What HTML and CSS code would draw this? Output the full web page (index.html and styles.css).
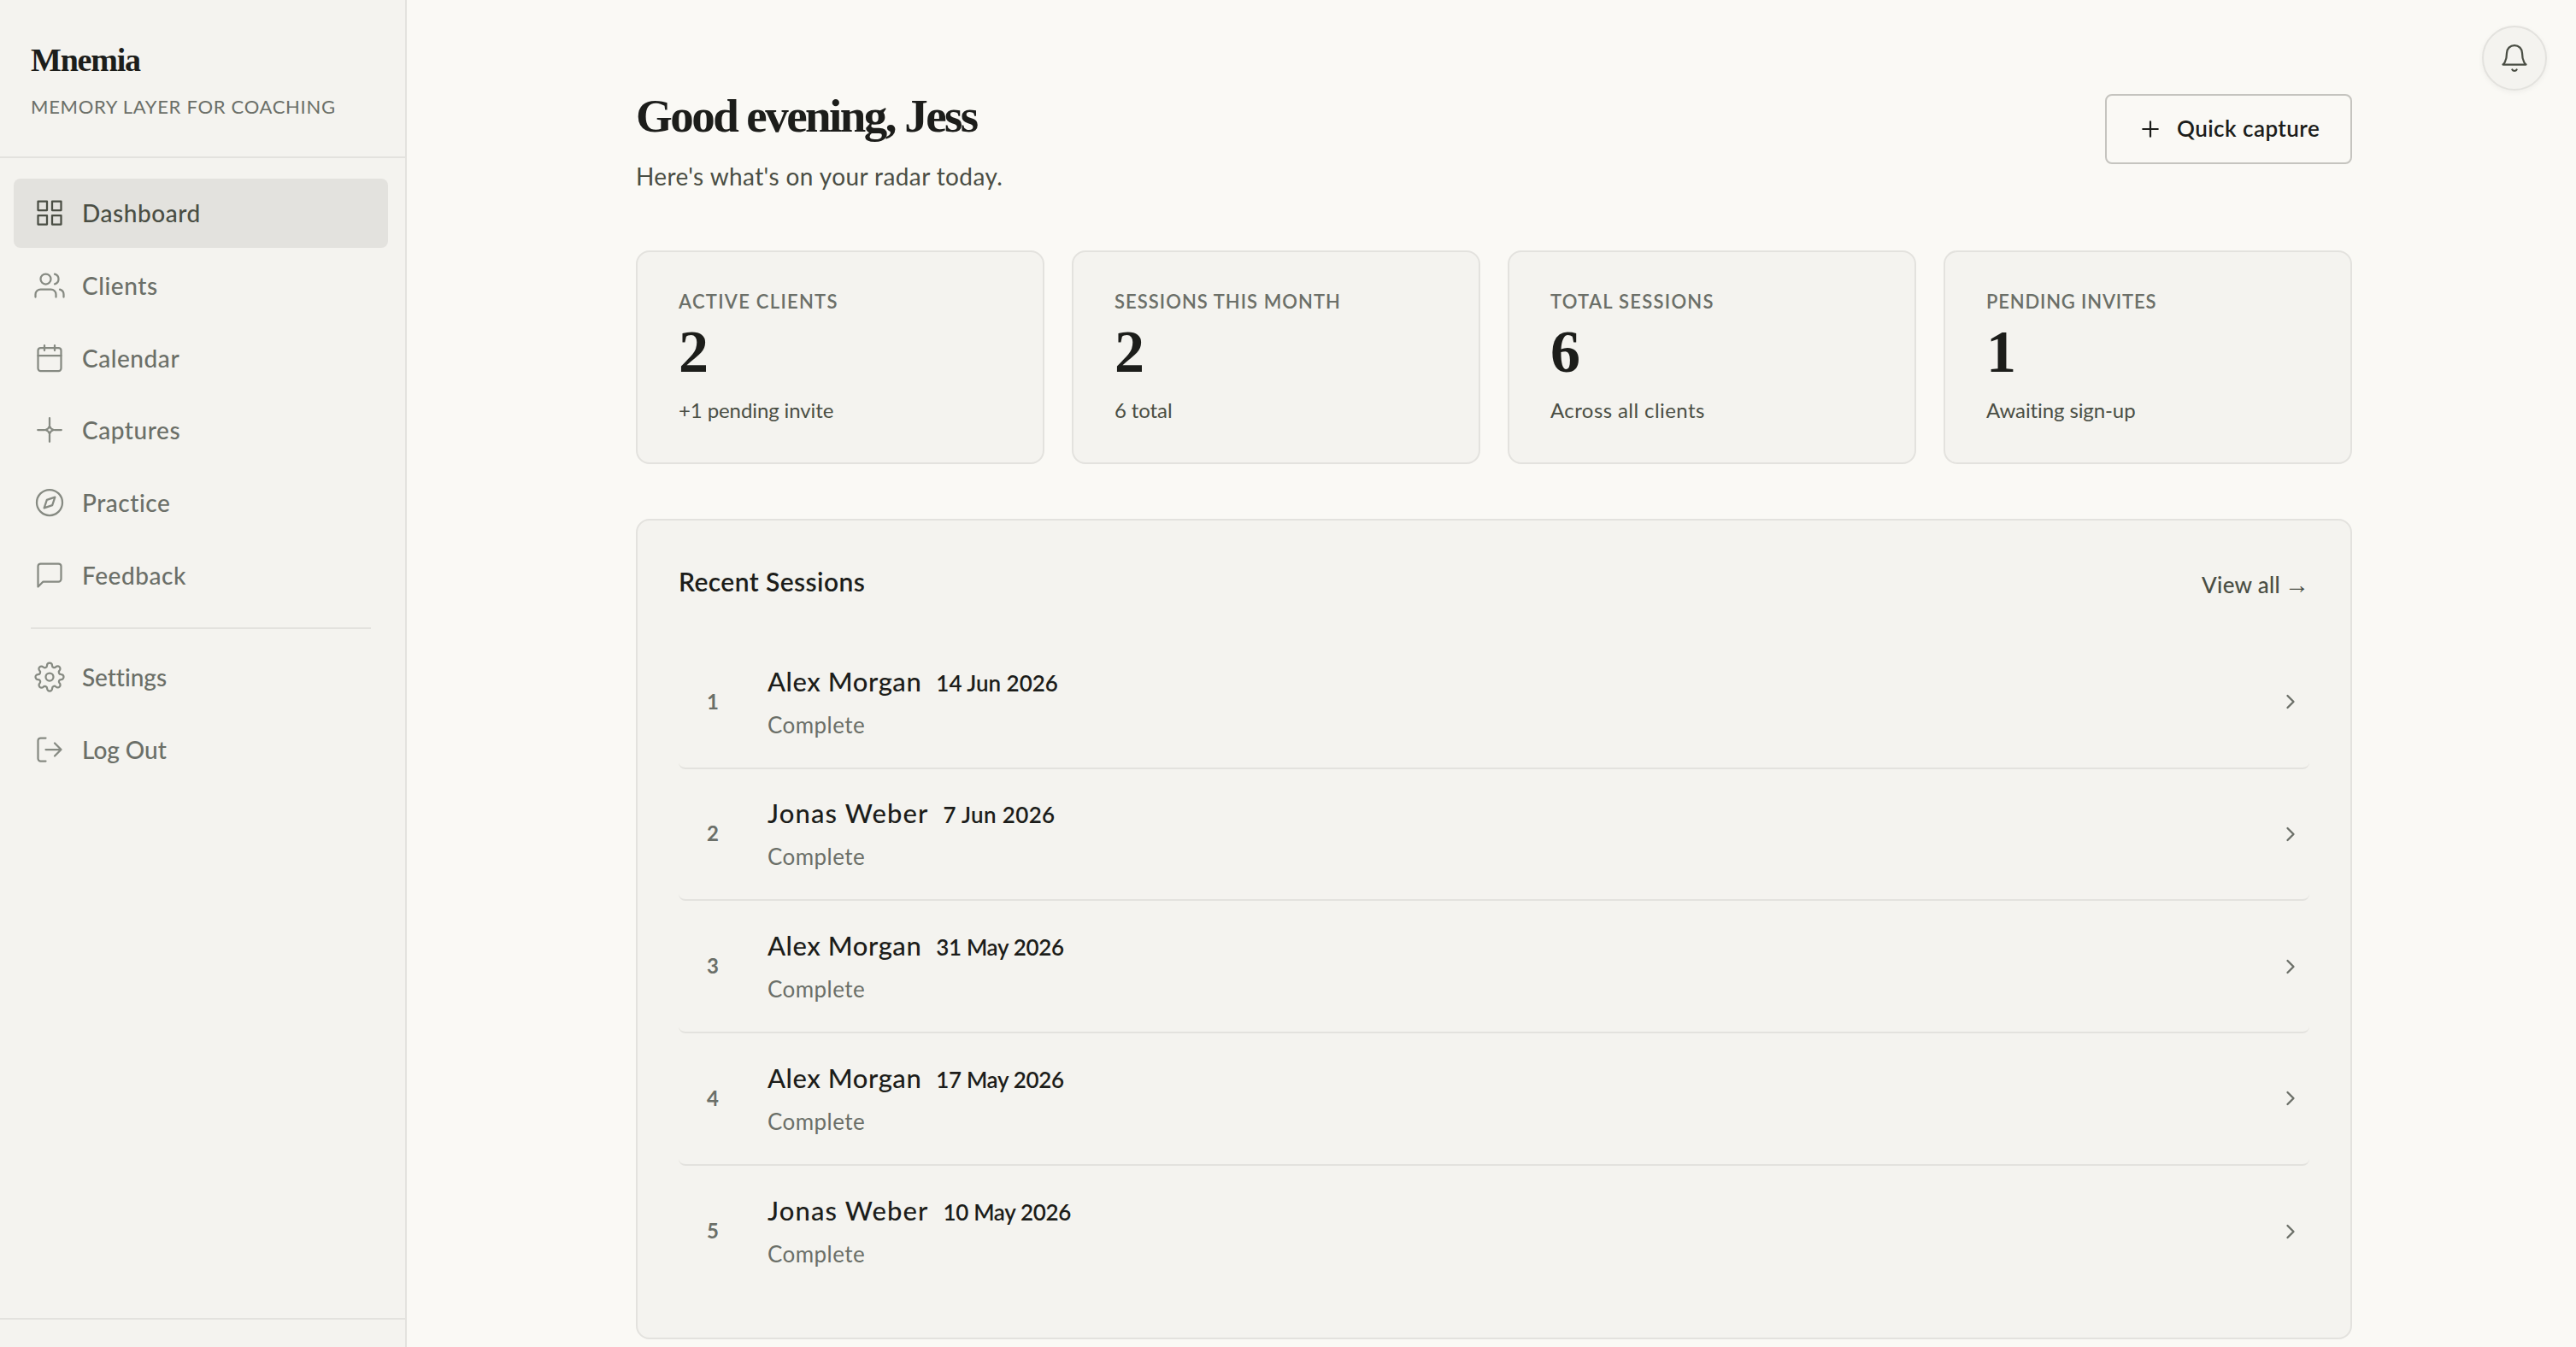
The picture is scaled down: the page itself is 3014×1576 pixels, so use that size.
FILE: index.html
```html
<!DOCTYPE html>
<html lang="en">
<head>
<meta charset="utf-8">
<title>Mnemia – Dashboard</title>
<link rel="stylesheet" href="styles.css">
</head>
<body>
<div class="app">
  <aside class="sidebar">
    <div class="brand">
      <div class="brand-name">Mnemia</div>
      <div class="brand-tag">MEMORY LAYER FOR COACHING</div>
    </div>
    <nav class="nav">
      <a class="nav-item active"><svg class="icon" viewBox="0 0 24 24"><rect x="3" y="3" width="7" height="7"/><rect x="14" y="3" width="7" height="7"/><rect x="14" y="14" width="7" height="7"/><rect x="3" y="14" width="7" height="7"/></svg><span>Dashboard</span></a>
      <a class="nav-item"><svg class="icon" viewBox="0 0 24 24"><path d="M17 21v-2a4 4 0 0 0-4-4H5a4 4 0 0 0-4 4v2"/><circle cx="9" cy="7" r="4"/><path d="M23 21v-2a4 4 0 0 0-3-3.87"/><path d="M16 3.13a4 4 0 0 1 0 7.75"/></svg><span>Clients</span></a>
      <a class="nav-item"><svg class="icon" viewBox="0 0 24 24"><rect x="3" y="4" width="18" height="18" rx="2"/><path d="M16 2v4M8 2v4M3 10h18"/></svg><span>Calendar</span></a>
      <a class="nav-item"><svg class="icon" viewBox="0 0 24 24"><path d="M12 2.8v5.400M12 15.800v5.400M2.800 12h5.400M15.800 12h5.400"/><path d="M12 9l1.100 1.900L15 12l-1.900 1.100L12 15l-1.100-1.900L9 12l1.900-1.100z"/></svg><span>Captures</span></a>
      <a class="nav-item"><svg class="icon" viewBox="0 0 24 24"><circle cx="12" cy="12" r="10"/><path d="M16.240 7.760l-2.120 6.360-6.360 2.120 2.120-6.360z"/></svg><span>Practice</span></a>
      <a class="nav-item"><svg class="icon" viewBox="0 0 24 24"><path d="M21 15a2 2 0 0 1-2 2H7l-4 4V5a2 2 0 0 1 2-2h14a2 2 0 0 1 2 2z"/></svg><span>Feedback</span></a>
      <div class="nav-divider"></div>
      <a class="nav-item compact"><svg class="icon" viewBox="0 0 24 24"><circle cx="12" cy="12" r="3"/><path d="M19.400 15a1.650 1.650 0 0 0 .33 1.820l.06.06a2 2 0 0 1 0 2.830 2 2 0 0 1-2.830 0l-.06-.06a1.650 1.650 0 0 0-1.820-.33 1.650 1.650 0 0 0-1 1.510V21a2 2 0 0 1-2 2 2 2 0 0 1-2-2v-.09A1.650 1.650 0 0 0 9 19.400a1.650 1.650 0 0 0-1.820.33l-.06.06a2 2 0 0 1-2.830 0 2 2 0 0 1 0-2.830l.06-.06a1.650 1.650 0 0 0 .33-1.820 1.650 1.650 0 0 0-1.510-1H3a2 2 0 0 1-2-2 2 2 0 0 1 2-2h.09A1.650 1.650 0 0 0 4.600 9a1.650 1.650 0 0 0-.33-1.820l-.06-.06a2 2 0 0 1 0-2.830 2 2 0 0 1 2.830 0l.06.06a1.650 1.650 0 0 0 1.820.33H9a1.650 1.650 0 0 0 1-1.510V3a2 2 0 0 1 2-2 2 2 0 0 1 2 2v.09a1.650 1.650 0 0 0 1 1.510 1.650 1.650 0 0 0 1.820-.33l.06-.06a2 2 0 0 1 2.830 0 2 2 0 0 1 0 2.830l-.06.06a1.650 1.650 0 0 0-.33 1.820V9a1.650 1.650 0 0 0 1.510 1H21a2 2 0 0 1 2 2 2 2 0 0 1-2 2h-.09a1.650 1.650 0 0 0-1.510 1z"/></svg><span>Settings</span></a>
      <a class="nav-item compact"><svg class="icon" viewBox="0 0 24 24"><path d="M9 21H5a2 2 0 0 1-2-2V5a2 2 0 0 1 2-2h4M16 17l5-5-5-5M21 12H9"/></svg><span>Log Out</span></a>
    </nav>
    <div class="sidebar-foot"></div>
  </aside>

  <main class="main">
    <header class="head">
      <div>
        <h1 class="title">Good evening, Jess</h1>
        <p class="subtitle">Here's what's on your radar today.</p>
      </div>
      <button class="capture"><svg class="plus" viewBox="0 0 24 24"><path d="M12 5v14M5 12h14"/></svg><span>Quick capture</span></button>
    </header>

    <section class="stats">
      <div class="stat"><div class="stat-label loose">ACTIVE CLIENTS</div><div class="stat-value">2</div><div class="stat-note tight">+1 pending invite</div></div>
      <div class="stat"><div class="stat-label">SESSIONS THIS MONTH</div><div class="stat-value">2</div><div class="stat-note tight">6 total</div></div>
      <div class="stat"><div class="stat-label loose">TOTAL SESSIONS</div><div class="stat-value">6</div><div class="stat-note">Across all clients</div></div>
      <div class="stat"><div class="stat-label snug">PENDING INVITES</div><div class="stat-value">1</div><div class="stat-note tight">Awaiting sign-up</div></div>
    </section>

    <section class="panel">
      <div class="panel-head">
        <h2 class="panel-title">Recent Sessions</h2>
        <a class="view-all">View all <span class="arrow">→</span></a>
      </div>
      <div class="rows">
        <div class="row"><span class="num">1</span><div class="info"><div class="line"><span class="name">Alex Morgan</span><span class="date">14 Jun 2026</span></div><div class="status">Complete</div></div><svg class="chev" viewBox="0 0 24 24"><path d="M9 18l6-6-6-6"/></svg></div>
        <div class="row"><span class="num">2</span><div class="info"><div class="line"><span class="name wide">Jonas Weber</span><span class="date short">7 Jun 2026</span></div><div class="status">Complete</div></div><svg class="chev" viewBox="0 0 24 24"><path d="M9 18l6-6-6-6"/></svg></div>
        <div class="row"><span class="num">3</span><div class="info"><div class="line"><span class="name">Alex Morgan</span><span class="date may">31 May 2026</span></div><div class="status">Complete</div></div><svg class="chev" viewBox="0 0 24 24"><path d="M9 18l6-6-6-6"/></svg></div>
        <div class="row"><span class="num">4</span><div class="info"><div class="line"><span class="name">Alex Morgan</span><span class="date may">17 May 2026</span></div><div class="status">Complete</div></div><svg class="chev" viewBox="0 0 24 24"><path d="M9 18l6-6-6-6"/></svg></div>
        <div class="row"><span class="num">5</span><div class="info"><div class="line"><span class="name wide">Jonas Weber</span><span class="date may">10 May 2026</span></div><div class="status">Complete</div></div><svg class="chev" viewBox="0 0 24 24"><path d="M9 18l6-6-6-6"/></svg></div>
      </div>
    </section>
  </main>

  <button class="bell" aria-label="Notifications"><svg class="icon" viewBox="0 0 24 24"><path d="M18 8A6 6 0 0 0 6 8c0 7-3 9-3 9h18s-3-2-3-9"/><path d="M13.730 21a2 2 0 0 1-3.460 0"/></svg></button>
</div>
</body>
</html>
```
FILE: styles.css
```css
* { box-sizing: border-box; }
body {
  margin: 0;
  background: #faf9f5;
  color: #1c1d1a;
  font-family: Lato, "Liberation Sans", sans-serif;
}
h1, h2, p { margin: 0; }
svg {
  fill: none;
  stroke: currentColor;
  stroke-linecap: round;
  stroke-linejoin: round;
  flex: none;
}
button { font-family: inherit; padding: 0; }

.app { display: flex; height: 1576px; overflow: hidden; }

/* Sidebar */
.sidebar {
  width: 476px;
  flex: none;
  display: flex;
  flex-direction: column;
  background: #f4f3ef;
  border-right: 2px solid #e3e2de;
}
.brand {
  height: 185px;
  padding: 48px 36px 0;
  border-bottom: 2px solid #e3e2de;
}
.brand-name {
  font: 700 38px/44px "Liberation Serif", serif;
  letter-spacing: -1.22px;
}
.brand-tag {
  margin-top: 17px;
  font-size: 22px;
  line-height: 32px;
  letter-spacing: 0.7px;
  color: #6b6f68;
}
.nav {
  flex: 1;
  display: flex;
  flex-direction: column;
  gap: 4px;
  padding: 24px 20px 0 16px;
}
.nav-item {
  display: flex;
  align-items: center;
  gap: 20px;
  height: 80.67px;
  padding: 0 24px;
  border-radius: 8px;
  font-size: 28px;
  font-weight: 500;
  letter-spacing: 0.55px;
  color: #6b6f68;
}
.nav-item.compact { letter-spacing: -0.05px; }
.icon { width: 36px; height: 36px; stroke-width: 1.5; }
.nav-item .icon { color: #868a82; }
.nav-item.active { background: #e3e2de; color: #4a4e44; }
.nav-item.active .icon { color: #4a4e44; }
.nav-divider { height: 2px; margin: 17px 20px 12px; background: #e3e2de; }
.sidebar-foot { height: 34px; border-top: 2px solid #e3e2de; }

/* Main column */
.main { width: 2008px; margin-left: 268px; padding-top: 104px; flex: none; }
.head { display: flex; justify-content: space-between; align-items: flex-start; height: 189px; }
.title {
  font: 700 55px/64px "Liberation Serif", serif;
  letter-spacing: -2.55px;
}
.subtitle {
  margin-top: 16px;
  font-size: 28px;
  line-height: 44px;
  letter-spacing: 0.4px;
  color: #4a4e44;
}
.capture {
  display: flex;
  align-items: center;
  gap: 16px;
  width: 289px;
  height: 82px;
  margin-top: 6px;
  padding-left: 36px;
  border: 2px solid #c5c4bf;
  border-radius: 8px;
  background: transparent;
  color: #1c1d1a;
  font-size: 26px;
  font-weight: 600;
  letter-spacing: 0.45px;
}
.capture span { padding-bottom: 3px; }
.plus { width: 30px; height: 30px; stroke-width: 1.75; }

.stats { display: grid; grid-template-columns: repeat(4, 1fr); gap: 32px; }
.stat, .panel {
  background: #f4f3ef;
  border: 2px solid #e3e2de;
  border-radius: 16px;
}
.stat { height: 250px; padding: 42px 48px 0; }
.stat-label {
  font-size: 22px;
  line-height: 32px;
  font-weight: 600;
  letter-spacing: 1.03px;
  color: #6b6f68;
}
.stat-label.loose { letter-spacing: 1.27px; }
.stat-label.snug { letter-spacing: 0.82px; }
.stat-value {
  margin-top: 3px;
  font: 700 70px/80px "Liberation Serif", serif;
}
.stat-note {
  margin-top: 10px;
  font-size: 24px;
  line-height: 36px;
  letter-spacing: 0.41px;
  color: #4a4e44;
}
.stat-note.tight { letter-spacing: -0.1px; }

/* Recent sessions */
.panel { height: 960px; margin-top: 64px; padding: 48px 48px 0; }
.panel-head { display: flex; justify-content: space-between; height: 88px; }
.panel-title { padding-top: 1px; font-size: 30px; line-height: 44px; font-weight: 600; letter-spacing: 0.41px; }
.view-all {
  display: flex;
  gap: 5px;
  padding-top: 5px;
  font-size: 26px;
  line-height: 44px;
  font-weight: 500;
  letter-spacing: 0.29px;
  color: #4a4e44;
}
.arrow { font: 400 29px/44px "Liberation Sans", sans-serif; letter-spacing: 0; }
.row {
  display: flex;
  align-items: center;
  height: 154.67px;
  padding: 0 8px 0 24px;
  border-bottom: 2px solid #e3e2de;
  border-radius: 8px;
}
.row:last-child { border-bottom: 0; }
.num {
  width: 32px;
  margin-right: 48px;
  padding-bottom: 2px;
  text-align: center;
  font-size: 24px;
  font-weight: 700;
  color: #6b6f68;
}
.info { flex: 1; }
.line { display: flex; align-items: baseline; gap: 17px; height: 40px; line-height: 40px; }
.name { font-size: 31px; font-weight: 500; letter-spacing: 0.55px; }
.name.wide { letter-spacing: 1.13px; }
.date { font-size: 26px; font-weight: 600; letter-spacing: 0; }
.date.short { letter-spacing: 0.35px; }
.date.may { letter-spacing: -0.33px; }
.status {
  margin-top: 13px;
  font-size: 26px;
  line-height: 36px;
  letter-spacing: 0.45px;
  color: #6b6f68;
}
.chev { width: 28px; height: 28px; stroke-width: 2; color: #6b6f68; }

/* Floating notification button */
.bell {
  position: absolute;
  top: 30px;
  right: 34px;
  display: flex;
  align-items: center;
  justify-content: center;
  width: 76px;
  height: 76px;
  border: 2px solid #e3e2de;
  border-radius: 50%;
  background: #f4f3ef;
  color: #4a4e44;
  box-shadow: 0 2px 6px rgba(28, 29, 26, 0.05);
}
```
